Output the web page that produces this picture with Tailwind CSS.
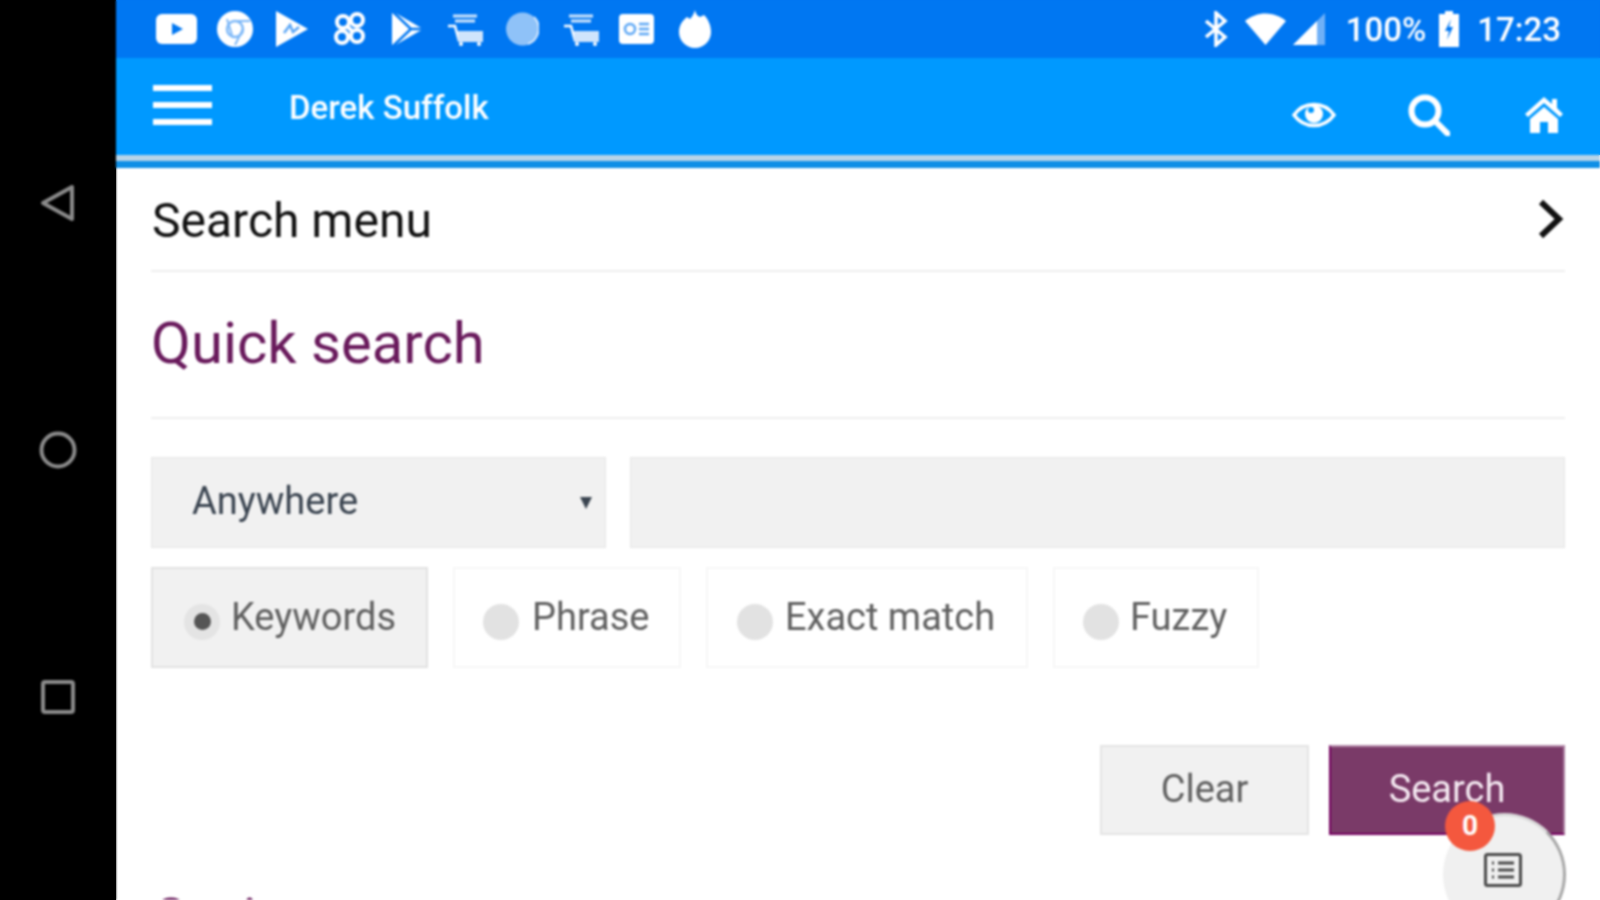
<!DOCTYPE html>
<html lang="en">
<head>
  <meta charset="UTF-8" />
  <title>Quick search</title>
  <script src="https://cdn.jsdelivr.net/npm/@tailwindcss/browser@4"></script>
</head>
<body class="w-[1600px] h-[900px] overflow-hidden bg-white font-['Roboto',sans-serif]">
<!-- backing colours so the blur doesn't fade out at the window edges -->
<div class="h-[900px] bg-[linear-gradient(90deg,#000_116px,transparent_116px),linear-gradient(180deg,#0077f2_58px,#0099ff_58px,#0099ff_155px,#fff_155px)]">
<div class="flex h-[900px] blur-[0.8px]">
  <!-- nav bar -->
  <div class="w-[116px] shrink-0 bg-black flex flex-col items-center text-[#8a8a8a]">
    <svg class="mt-[183px]" width="36" height="40" viewBox="0 0 36 40" fill="none" stroke="currentColor" stroke-width="4" stroke-linejoin="round"><path d="M3 20 L32 4 V36 Z"/></svg>
    <svg class="mt-[208px]" width="38" height="38" viewBox="0 0 38 38" fill="none" stroke="currentColor" stroke-width="4"><circle cx="19" cy="19" r="16.5"/></svg>
    <svg class="mt-[211px]" width="34" height="34" viewBox="0 0 34 34" fill="none" stroke="currentColor" stroke-width="4" stroke-linejoin="round"><rect x="2" y="2" width="30" height="30" rx="2"/></svg>
  </div>

  <div class="relative flex-1 min-w-0 flex flex-col">
    <!-- status bar -->
    <div class="h-[58px] bg-[#0077f2] flex items-center text-white pl-[40px] pr-[39px]">
      <svg class="ml-0" width="41" height="30" viewBox="0 0 41 30"><rect width="41" height="30" rx="6" fill="#fff"/><path d="M16 9 L27 15 L16 21 Z" fill="#0077f2"/></svg>
      <svg class="ml-[20px]" width="36" height="36" viewBox="0 0 36 36"><circle cx="18" cy="18" r="18" fill="#fff"/><circle cx="18" cy="18" r="8" fill="none" stroke="#7db8f8" stroke-width="2.5"/><path d="M10 8 L15 24 M18 10 H33 M26 18 L18 34" stroke="#7db8f8" stroke-width="2"/></svg>
      <svg class="ml-[22px]" width="33" height="36" viewBox="0 0 33 36"><path d="M1 0 L33 18 L1 36 Z" fill="#fff"/><path d="M9 22 L15 14 L18 21 L24 16" fill="none" stroke="#5ba6f5" stroke-width="2.5"/></svg>
      <svg class="ml-[24px]" width="35" height="36" viewBox="0 0 35 36" fill="none" stroke="#fff" stroke-width="4"><circle cx="11" cy="11" r="6"/><circle cx="25" cy="9" r="6"/><circle cx="25" cy="25" r="6"/><circle cx="10" cy="26" r="6"/><path d="M14 14 L21 21"/></svg>
      <svg class="ml-[24px]" width="32" height="36" viewBox="0 0 32 36"><path d="M1 0 L32 18 L1 36 Z" fill="#fff"/><path d="M1 0 L20 18 L1 36 M20 18 L32 18" fill="none" stroke="#0077f2" stroke-width="2.5"/></svg>
      <svg class="ml-[24px]" width="38" height="34" viewBox="0 0 38 34"><path d="M6 4 H30 M8 9 H28" stroke="#cfe4fc" stroke-width="3"/><path d="M1 14 H8 L12 29" fill="none" stroke="#fff" stroke-width="2.5"/><rect x="11" y="19" width="25" height="11" fill="#cfe4fc"/><circle cx="14" cy="32" r="2" fill="#fff"/><circle cx="32" cy="32" r="2" fill="#fff"/></svg>
      <svg class="ml-[21px]" width="33" height="36" viewBox="0 0 33 36"><circle cx="16.5" cy="18" r="16.5" fill="#8fc2f8"/><path d="M28 6 A16.5 16.5 0 0 1 22 33" fill="none" stroke="#d4e7fd" stroke-width="2"/></svg>
      <svg class="ml-[24px]" width="37" height="34" viewBox="0 0 37 34"><path d="M6 4 H30 M8 9 H28" stroke="#cfe4fc" stroke-width="3"/><path d="M1 14 H8 L12 29" fill="none" stroke="#fff" stroke-width="2.5"/><rect x="11" y="19" width="25" height="11" fill="#cfe4fc"/><circle cx="14" cy="32" r="2" fill="#fff"/><circle cx="32" cy="32" r="2" fill="#fff"/></svg>
      <svg class="ml-[19px]" width="35" height="30" viewBox="0 0 35 30"><rect width="35" height="30" rx="4" fill="#fff"/><circle cx="11" cy="15" r="5" fill="none" stroke="#5ba6f5" stroke-width="2.5"/><path d="M20 10 H30 M20 15 H30 M20 20 H30" stroke="#5ba6f5" stroke-width="2.5"/></svg>
      <svg class="ml-[25px]" width="32" height="38" viewBox="0 0 32 38"><path d="M16 0 C17 5 19 6 21 7 L25 5 C29 9 32 15 32 22 A16 16 0 0 1 0 22 C0 15 4 10 8 7 L11 9 C13 7 15 4 16 0 Z" fill="#fff"/></svg>

      <div class="ml-auto flex items-center">
        <svg width="24" height="36" viewBox="0 0 24 36" fill="none" stroke="#fff" stroke-width="3.5"><path d="M2 10 L21 26 L12 34 V2 L21 10 L2 26"/></svg>
        <svg class="ml-[17px]" width="41" height="32" viewBox="0 0 41 32"><path d="M0 8 C12 -2 29 -2 41 8 L20.5 32 Z" fill="#fff"/></svg>
        <svg class="ml-[7px]" width="32" height="32" viewBox="0 0 32 32"><path d="M0 32 L32 0 V32 Z" fill="#6fb0f7"/><path d="M0 32 L24 8 V32 Z" fill="#fff"/></svg>
        <span class="ml-[21px] text-[33px] leading-none font-medium">100%</span>
        <svg class="ml-[13px]" width="20" height="36" viewBox="0 0 20 36"><path d="M6 0 H14 V3 H20 V36 H0 V3 H6 Z" fill="#fff"/><path d="M12 8 L6 20 H10 L8 29 L14 16 H10 Z" fill="#0077f2"/></svg>
        <span class="ml-[18px] text-[33px] leading-none font-medium">17:23</span>
      </div>
    </div>

    <!-- app bar -->
    <div class="h-[97px] bg-[#0099ff] flex items-center text-white pl-[37px] pr-[37px]">
      <div class="w-[59px] flex flex-col gap-[11px] mb-[3px]">
        <div class="h-[6px] bg-white"></div>
        <div class="h-[6px] bg-white"></div>
        <div class="h-[6px] bg-white"></div>
      </div>
      <span class="ml-[77px] text-[33px] font-medium mt-[2px]">Derek Suffolk</span>
      <div class="ml-auto flex items-center pt-[16px]">
        <svg class="ml-[2px]" width="44" height="30" viewBox="0 0 44 30" fill="none" stroke="#fff" stroke-width="3.5"><path d="M2 15 C12 1 32 1 42 15 C32 29 12 29 2 15 Z"/><circle cx="22" cy="14" r="9" fill="#fff" stroke="none"/><circle cx="19" cy="10" r="3" fill="#0099ff" stroke="none"/></svg>
        <svg class="ml-[72px]" width="42" height="42" viewBox="0 0 42 42" fill="none" stroke="#fff" stroke-width="6"><circle cx="17" cy="17" r="13.5"/><path d="M27 27 L40 40" stroke-linecap="round"/></svg>
        <svg class="ml-[75px]" width="38" height="36" viewBox="0 0 38 36"><path d="M19 0 L27 7 V2 H32 V11 L38 17 L35 20 L19 6 L3 20 L0 17 Z M19 10 L33 22 V36 H23 V25 H15 V36 H5 V22 Z" fill="#fff"/></svg>
      </div>
    </div>
    <div class="h-[6px] bg-[#b7d4e8]"></div>
    <div class="h-[7px] bg-[#0f8fe6]"></div>

    <!-- content -->
    <div class="flex-1 min-h-0 overflow-hidden pl-[35px] pr-[35px]">
      <div class="h-[104px] border-b-2 border-[#eeeeee] flex items-center justify-between pl-[1px]">
        <span class="text-[48px] leading-none text-[#111111] mt-[3px]">Search menu</span>
        <svg class="mr-[1px]" width="28" height="40" viewBox="0 0 28 40" fill="none" stroke="#111" stroke-width="6"><path d="M5 3 L23 20 L5 37"/></svg>
      </div>
      <div class="h-[147px] border-b-2 border-[#eeeeee] flex items-center pb-[4px]">
        <h2 class="text-[58px] leading-none text-[#691a5c]">Quick search</h2>
      </div>

      <div class="flex gap-[24px] mt-[38px]">
        <div class="w-[455px] h-[91px] bg-[#f1f1f1] border border-[#e6e6e6] flex items-center justify-between pl-[40px] pr-[12px]">
          <span class="text-[38px] leading-none text-[#3a4450] mb-[4px]">Anywhere</span>
          <svg width="14" height="14" viewBox="0 0 14 14"><path d="M1 1 H13 L7 13 Z" fill="#3a4450"/></svg>
        </div>
        <div class="flex-1 h-[91px] bg-[#f1f1f1] border border-[#e6e6e6]"></div>
      </div>

      <div class="flex gap-[25px] mt-[19px] text-[38px] text-[#606060] leading-none">
        <label class="w-[277px] h-[101px] bg-[#f1f1f1] border-2 border-[#e2e2e2] flex items-center pl-[31px] gap-[11px] pb-[2px]">
          <span class="mt-[10px] w-[36px] h-[36px] rounded-full bg-[#e4e4e4] flex items-center justify-center"><span class="w-[17px] h-[17px] rounded-full bg-[#555555]"></span></span>
          Keywords
        </label>
        <label class="w-[228px] h-[101px] border-2 border-[#f7f7f7] flex items-center pl-[28px] gap-[13px] pb-[2px]">
          <span class="mt-[10px] w-[36px] h-[36px] rounded-full bg-[#e2e2e2]"></span>
          Phrase
        </label>
        <label class="w-[322px] h-[101px] border-2 border-[#f7f7f7] flex items-center pl-[29px] gap-[12px] pb-[2px]">
          <span class="mt-[10px] w-[36px] h-[36px] rounded-full bg-[#e2e2e2]"></span>
          Exact match
        </label>
        <label class="w-[206px] h-[101px] border-2 border-[#f7f7f7] flex items-center pl-[28px] gap-[11px] pb-[2px]">
          <span class="mt-[10px] w-[36px] h-[36px] rounded-full bg-[#e2e2e2]"></span>
          Fuzzy
        </label>
      </div>

      <div class="flex justify-end gap-[20px] mt-[77px] text-[38px] leading-none">
        <button class="w-[209px] h-[90px] bg-[#f1f1f1] border-2 border-[#e4e4e4] text-[#606060] pb-[2px]">Clear</button>
        <button class="w-[236px] h-[90px] bg-[#7a3a68] border-2 border-[#74005f] border-t-[#b58cab] border-r-[#a87a9c] text-[#f5eaf2] pb-[2px]">Search</button>
      </div>

      <h2 class="mt-[55px] text-[58px] leading-none text-[#691a5c]">Options</h2>
    </div>

    <!-- floating basket -->
    <div class="absolute left-[1327px] top-[813px] w-[123px] h-[123px] rounded-full bg-[#f0f0f0] border-[3px] border-[#a8a8a8] border-l-[#f0f0f0] border-t-[#d8d8d8] flex justify-center pt-[37px] pr-[3px]">
      <svg width="38" height="34" viewBox="0 0 38 34" fill="none" stroke="#4a4a4a"><rect x="1.5" y="1.5" width="35" height="31" rx="2" stroke-width="3"/><path d="M8 10 H10 M14 10 H30 M8 17 H10 M14 17 H30 M8 24 H10 M14 24 H30" stroke-width="3"/></svg>
    </div>
    <div class="absolute left-[1329px] top-[801px] w-[50px] h-[50px] rounded-full bg-[#f4583e] flex items-center justify-center text-white text-[28px] font-bold leading-none">0</div>
  </div>
</div>
</div>
</body>
</html>
